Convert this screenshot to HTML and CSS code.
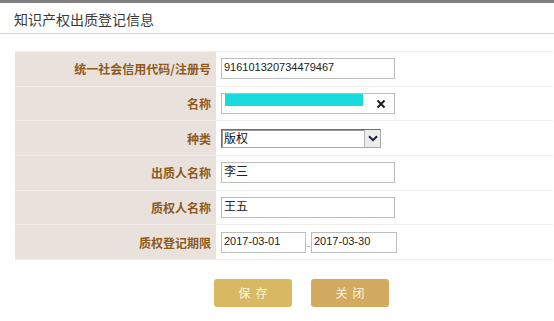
FILE: index.html
```html
<!DOCTYPE html>
<html lang="zh">
<head>
<meta charset="utf-8">
<title>知识产权出质登记信息</title>
<link rel="stylesheet" href="styles.css">
</head>
<body>
<div class="topbar"></div>
<div class="header">知识产权出质登记信息</div>
<div class="form">
  <div class="row">
    <div class="label">统一社会信用代码/注册号</div>
    <div class="value"><div class="field w174 num">916101320734479467</div></div>
  </div>
  <div class="row">
    <div class="label">名称</div>
    <div class="value">
      <div class="field w174 namefield">
        <span class="redact"></span>
        <svg class="clear" width="10" height="10" viewBox="0 0 10 10"><path d="M1.5 1.5 L8.5 8.5 M8.5 1.5 L1.5 8.5" stroke="#1e1e1e" stroke-width="2" fill="none"/></svg>
      </div>
    </div>
  </div>
  <div class="row">
    <div class="label">种类</div>
    <div class="value">
      <div class="select">
        <span class="seltext">版权</span>
        <span class="arrow"><svg width="10" height="7" viewBox="0 0 10 7"><path d="M1 1.2 L5 5.2 L9 1.2" stroke="#15223f" stroke-width="2" fill="none"/></svg></span>
      </div>
    </div>
  </div>
  <div class="row">
    <div class="label">出质人名称</div>
    <div class="value"><div class="field w174">李三</div></div>
  </div>
  <div class="row">
    <div class="label">质权人名称</div>
    <div class="value"><div class="field w174">王五</div></div>
  </div>
  <div class="row">
    <div class="label">质权登记期限</div>
    <div class="value">
      <div class="field w85 num">2017-03-01</div>
      <span class="sep"></span>
      <div class="field w86 num">2017-03-30</div>
    </div>
  </div>
</div>
<div class="actions">
  <button class="btn save">保存</button>
  <button class="btn close">关闭</button>
</div>
</body>
</html>
```
FILE: styles.css
```css
html, body {
  margin: 0;
  padding: 0;
  background: #fff;
}
body {
  font-family: "Noto Sans CJK SC", "Noto Sans", sans-serif;
  font-size: 12px;
  color: #222;
  width: 554px;
  height: 321px;
  overflow: hidden;
}
.topbar {
  height: 3px;
  background: #808080;
}
.header {
  height: 31px;
  box-sizing: border-box;
  padding: 3px 0 0 14px;
  line-height: 27px;
  font-size: 14px;
  color: #3a3a3a;
  border-bottom: 1px solid #d2d2d2;
}
.form {
  margin: 17px 1px 0 15px;
  border-top: 1px solid #efedeb;
}
.row {
  display: grid;
  grid-template-columns: 201px 1fr;
  height: 34.67px;
  box-sizing: border-box;
  border-bottom: 1px solid #f1eeec;
}
.label {
  background: #e9e2dc;
  text-align: right;
  padding-right: 5px;
  font-weight: bold;
  color: #8d5a1c;
  display: flex;
  align-items: center;
  justify-content: flex-end;
}
.value {
  display: flex;
  align-items: center;
  padding-left: 5px;
}
.field {
  height: 21px;
  box-sizing: border-box;
  border: 1px solid #bdbdbd;
  background: #fff;
  padding: 0 2px 3px 2px;
  line-height: 16px;
  font-size: 12px;
  color: #222;
  display: flex;
  align-items: center;
  white-space: nowrap;
  overflow: hidden;
}
.num {
  font-family: "Liberation Sans", Arial, sans-serif;
  font-size: 11px;
  padding-left: 2px;
}
.w174 { width: 174px; }
.w85 { width: 85px; }
.w86 { width: 86px; }
.namefield {
  position: relative;
}
.redact {
  position: absolute;
  left: 3px;
  top: 0;
  width: 138px;
  height: 12px;
  background: #17dcdb;
}
.clear {
  position: absolute;
  right: 8px;
  top: 5px;
}
.select {
  width: 160px;
  height: 19px;
  box-sizing: border-box;
  border: 1px solid #a9a9a9;
  border-top-color: #6f6f6f;
  border-left-color: #6f6f6f;
  box-shadow: inset 1px 1px 0 #9a9a9a;
  background: #fff;
  display: flex;
  align-items: stretch;
  justify-content: space-between;
}
.seltext {
  padding-left: 2px;
  line-height: 16px;
  color: #111;
}
.arrow {
  width: 15px;
  border-left: 1px solid #b5b5b5;
  background: #ececec;
  display: flex;
  align-items: center;
  justify-content: center;
}
.sep {
  width: 3px;
  height: 1px;
  background: #b0b0b0;
  margin: 0 1px;
  align-self: flex-end;
  margin-bottom: 12px;
}
.actions {
  display: flex;
  gap: 19px;
  margin-top: 19px;
  padding-left: 214px;
}
.btn {
  width: 78px;
  height: 28px;
  border: none;
  border-radius: 3px;
  color: #fbf5e6;
  font-family: "Noto Sans CJK SC", sans-serif;
  font-size: 12px;
  letter-spacing: 5px;
  text-indent: 5px;
  padding: 0;
  cursor: pointer;
}
.save { background: #d8b862; }
.close { background: #d2aa60; }
```
